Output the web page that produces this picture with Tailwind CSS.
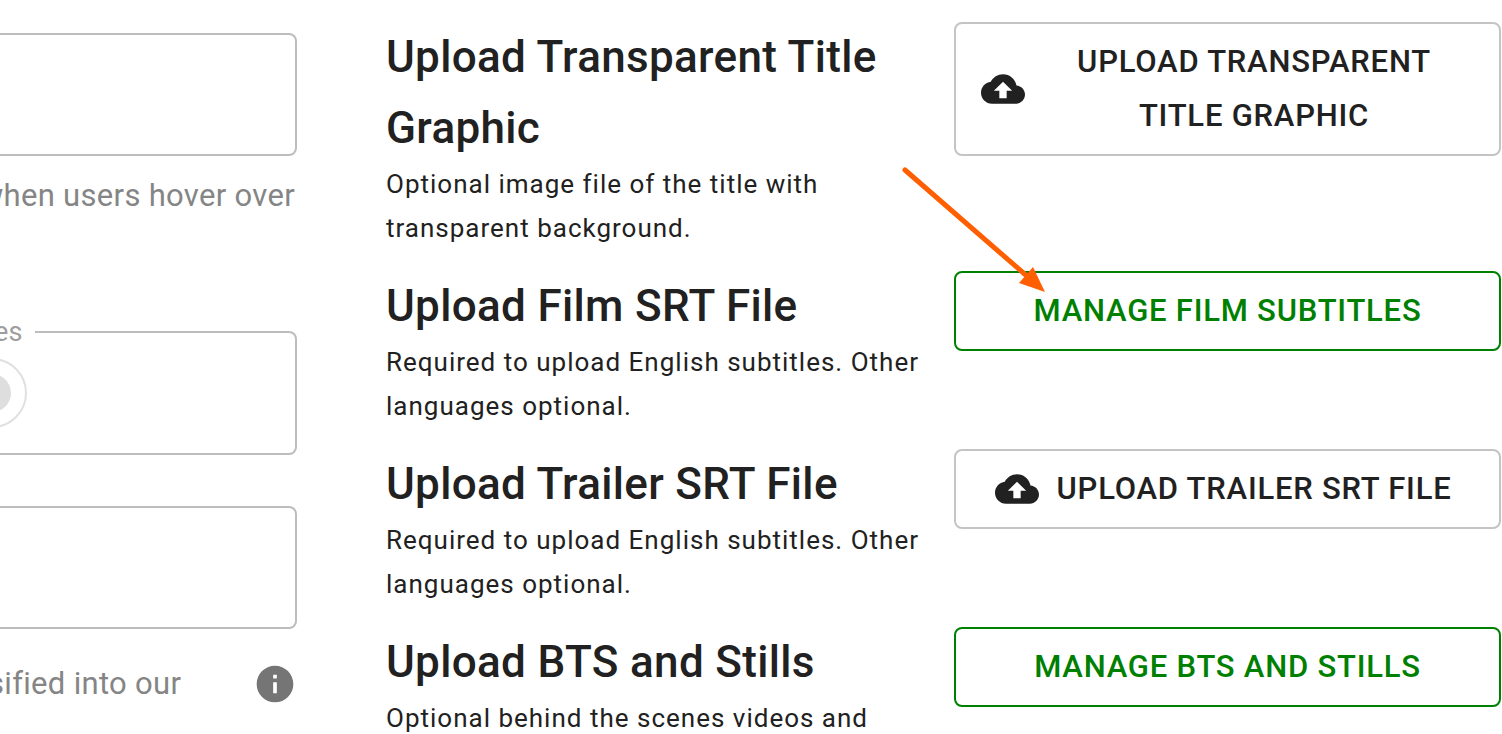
<!DOCTYPE html>
<html lang="en">
<head>
    <meta charset="UTF-8">
    <meta name="viewport" content="width=device-width, initial-scale=1.0">
    <title>Film Uploads</title>
    <script src="https://cdn.jsdelivr.net/npm/@tailwindcss/browser@4"></script>
</head>
<body class="bg-white text-[#212121] font-[Roboto,sans-serif] overflow-x-hidden">
    <main class="grid grid-cols-[297fr_1115fr] gap-x-[89px] pr-px">
        <!-- Film details -->
        <form class="min-w-0 pt-[33px] overflow-hidden">
            <input type="text" aria-label="Short description" aria-describedby="hover-help" class="block w-full h-[123px] border-y-2 border-r-2 border-[#bdbdbd] rounded-r-lg outline-none">
            <p id="hover-help" class="mt-5 pr-[2px] flex justify-end text-[31px] leading-10 tracking-[0.01em] whitespace-nowrap text-[#858585]">when users hover over</p>

            <fieldset class="mt-[100px] h-[139px] border-y-2 border-r-2 border-[#bdbdbd] rounded-r-lg">
                <legend class="pr-3 -ml-[6px] text-[27px] leading-8 tracking-[0.01em] text-[#9e9e9e]">es</legend>
                <input type="radio" aria-label="Yes" disabled class="block appearance-none size-[70px] -ml-[43px] mt-[10px] p-[14px] border-2 border-[#e0e0e0] rounded-full bg-[#dedede] bg-clip-content">
            </fieldset>

            <input type="text" aria-label="Genre" aria-describedby="genre-help" class="mt-[51px] block w-full h-[123px] border-y-2 border-r-2 border-[#bdbdbd] rounded-r-lg outline-none">
            <div class="mt-[33px] flex items-center justify-between">
                <p id="genre-help" class="-ml-3 text-[31px] leading-10 tracking-[0.01em] whitespace-nowrap text-[#858585]">sified into our</p>
                <button type="button" aria-label="More information" class="shrink-0 text-[#757575]">
                    <svg class="size-11" viewBox="0 0 24 24" fill="currentColor"><path d="M12 2C6.48 2 2 6.48 2 12s4.480 10 10 10 10-4.480 10-10S17.520 2 12 2zm1 15h-2v-6h2v6zm0-8h-2V7h2v2z"/></svg>
                </button>
            </div>
        </form>

        <!-- Uploads -->
        <div class="pt-[22px] flex flex-col gap-[21px]">
            <section class="grid grid-cols-[536fr_547fr] gap-x-8 items-start">
                <div>
                    <h2 class="text-[44px] leading-[71px] font-medium tracking-[0.0075em]">Upload Transparent Title Graphic</h2>
                    <p class="-mt-[2px] text-[26px] leading-[44px] tracking-[1px]">Optional image file of the title with transparent background.</p>
                </div>
                <button type="button" class="flex items-center justify-center w-full pl-[25px] pr-[34px] py-[11px] border-2 border-[#c4c4c4] rounded-lg text-[31px] leading-[54px] font-medium tracking-wide">
                    <svg class="size-11 mr-[18px] shrink-0" viewBox="0 0 24 24" fill="currentColor"><path d="M19.350 10.040C18.670 6.590 15.640 4 12 4 9.110 4 6.600 5.640 5.350 8.040 2.340 8.360 0 10.910 0 14c0 3.310 2.690 6 6 6h13c2.760 0 5-2.240 5-5 0-2.640-2.050-4.780-4.650-4.960zM14 13v4h-4v-4H7l5-5 5 5h-3z"/></svg>
                    <span>UPLOAD TRANSPARENT TITLE GRAPHIC</span>
                </button>
            </section>

            <section class="grid grid-cols-[536fr_547fr] gap-x-8 items-start">
                <div>
                    <h2 class="text-[44px] leading-[71px] font-medium tracking-[0.0075em]">Upload Film SRT File</h2>
                    <p class="-mt-[2px] text-[26px] leading-[44px] tracking-[1px]">Required to upload English subtitles. Other languages optional.</p>
                </div>
                <div class="relative">
                    <button type="button" class="w-full px-[34px] py-[11px] border-2 border-[#008000] rounded-lg text-[31px] leading-[54px] font-medium tracking-wide text-[#008000]">MANAGE FILM SUBTITLES</button>
                    <!-- Pointer to the subtitles button -->
                    <svg class="absolute -left-14 -top-[107px] w-[150px] h-[132px] pointer-events-none" viewBox="0 0 150 132" fill="none">
                        <path d="M7 6L130 113" stroke="#ff5f00" stroke-width="5" stroke-linecap="round"/>
                        <path d="M147 128L135 103L121 119Z" fill="#ff5f00"/>
                    </svg>
                </div>
            </section>

            <section class="grid grid-cols-[536fr_547fr] gap-x-8 items-start">
                <div>
                    <h2 class="text-[44px] leading-[71px] font-medium tracking-[0.0075em]">Upload Trailer SRT File</h2>
                    <p class="-mt-[2px] text-[26px] leading-[44px] tracking-[1px]">Required to upload English subtitles. Other languages optional.</p>
                </div>
                <button type="button" class="flex items-center justify-center w-full pl-[25px] pr-[34px] py-[11px] border-2 border-[#c4c4c4] rounded-lg text-[31px] leading-[54px] font-medium tracking-wide">
                    <svg class="size-11 mr-[18px] shrink-0" viewBox="0 0 24 24" fill="currentColor"><path d="M19.350 10.040C18.670 6.590 15.640 4 12 4 9.110 4 6.600 5.640 5.350 8.040 2.340 8.360 0 10.910 0 14c0 3.310 2.690 6 6 6h13c2.760 0 5-2.240 5-5 0-2.640-2.050-4.780-4.650-4.960zM14 13v4h-4v-4H7l5-5 5 5h-3z"/></svg>
                    <span>UPLOAD TRAILER SRT FILE</span>
                </button>
            </section>

            <section class="grid grid-cols-[536fr_547fr] gap-x-8 items-start">
                <div>
                    <h2 class="text-[44px] leading-[71px] font-medium tracking-[0.0075em]">Upload BTS and Stills</h2>
                    <p class="-mt-[2px] text-[26px] leading-[44px] tracking-[1px]">Optional behind the scenes videos and</p>
                </div>
                <button type="button" class="w-full px-[34px] py-[11px] border-2 border-[#008000] rounded-lg text-[31px] leading-[54px] font-medium tracking-wide text-[#008000]">MANAGE BTS AND STILLS</button>
            </section>
        </div>
    </main>
</body>
</html>
